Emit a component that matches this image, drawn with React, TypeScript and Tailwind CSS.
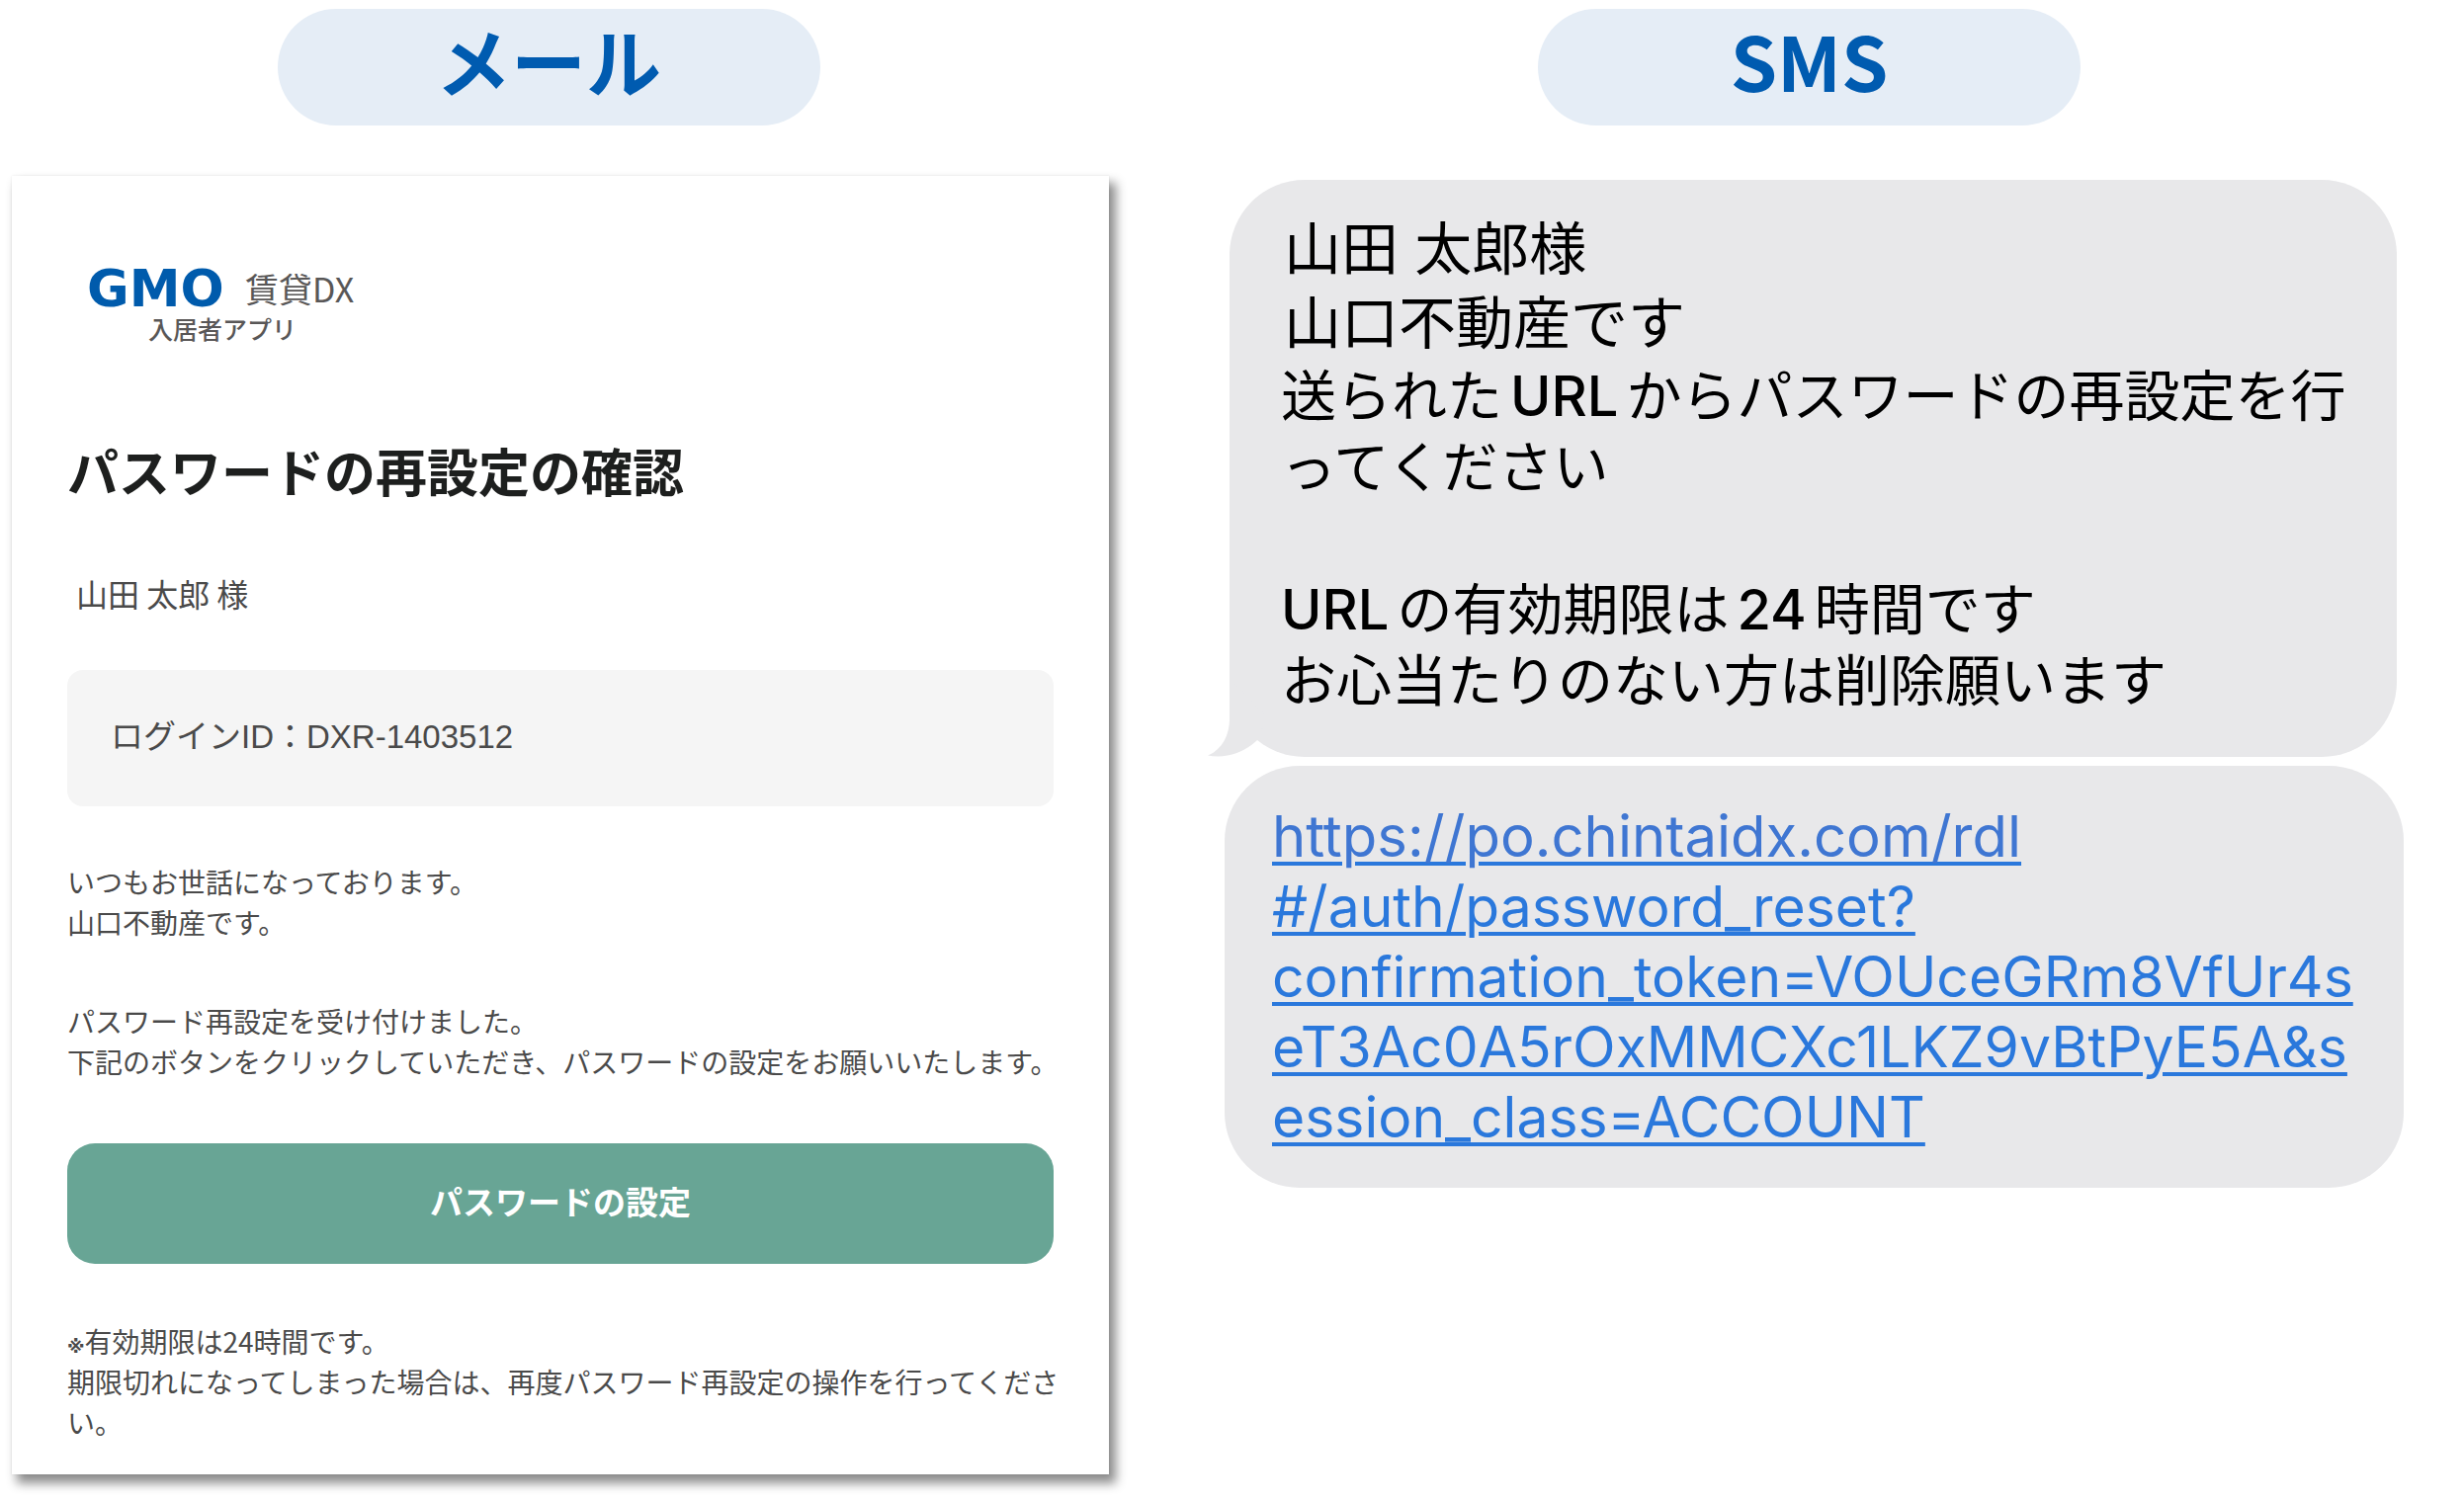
import type { ReactNode } from 'react';

const RESET_LINK_LINES = [
    '#/auth/password_reset?',
    'confirmation_token=VOUceGRm8VfUr4s',
    'eT3Ac0A5rOxMMCXc1LKZ9vBtPyE5A&s',
    'ession_class=ACCOUNT',
];

const Pill = ({ children }: { children: ReactNode }) => (
    <h2 className="flex h-[118px] w-[549px] items-center justify-center rounded-full bg-[#e5edf6] pb-4 text-[76px] leading-none font-bold text-[#005bb0]">
        {children}
    </h2>
);

// Latin words inside a Japanese line get a little air on both sides
const Latin = ({ children }: { children: ReactNode }) => (
    <span className="mr-2 font-medium">{children}</span>
);

const Logo = () => (
    <div className="w-[304px]">
        <div className="flex h-10 items-center pl-5">
            <span className="w-[160px] font-['DejaVu_Sans',sans-serif] text-[52px] leading-10 font-bold text-[#005bac]">GMO</span>
            <span className="text-[34px] leading-10 text-[#595757]">賃貸DX</span>
        </div>
        <div className="mt-1 pl-[82px] text-[25px] leading-8 font-medium text-[#595757]">入居者アプリ</div>
    </div>
);

const MailCard = () => (
    <article className="bg-white px-14 pt-[94px] pb-8 text-[28px] leading-[41px] whitespace-nowrap text-[#4a4a4a] shadow-[6px_8px_10px_1px_rgba(0,0,0,0.45),0_0_2px_rgba(0,0,0,0.08)]">
        <Logo />
        <h1 className="mt-24 text-[52px] leading-[64px] font-bold text-[#1d1f1e]">パスワードの再設定の確認</h1>
        <p className="mt-[72px] pl-[9px] text-[32px] leading-10">山田 太郎 様</p>
        <div className="mt-[58px] flex h-[138px] items-center rounded-2xl bg-[#f5f5f5] pb-1 pl-11 font-['Liberation_Sans','Noto_Sans_CJK_JP',sans-serif] text-[33px]">
            ログインID：DXR-1403512
        </div>
        <p className="mt-14">
            いつもお世話になっております。<br />
            山口不動産です。
        </p>
        <p className="mt-[59px]">
            パスワード再設定を受け付けました。<br />
            下記のボタンをクリックしていただき、パスワードの設定をお願いいたします。
        </p>
        <button type="button" className="mt-[62px] h-[122px] w-full rounded-[28px] bg-[#68a595] pb-1.5 text-[33px] font-bold text-white">
            パスワードの設定
        </button>
        <p className="mt-[58px]">
            <span className="font-['DejaVu_Sans',sans-serif] text-lg font-bold">※</span>有効期限は24時間です。<br />
            期限切れになってしまった場合は、再度パスワード再設定の操作を行ってくださ<br />
            い。
        </p>
    </article>
);

const SmsThread = () => (
    <div className="font-['Inter','Noto_Sans_CJK_JP',sans-serif] whitespace-nowrap">
        <div className="relative mr-[7px] ml-[5px] rounded-[76px] bg-[#e8e8ea] pt-[33px] pb-[41px] pl-[52px] text-[56px] leading-[72px] text-black">
            <p className="pl-[3px] text-[58px] leading-[75px]">
                山田 太郎様<br />
                山口不動産です
            </p>
            <p>
                送られた<span className="ml-2"><Latin>URL</Latin></span>からパスワードの再設定を行<br />
                ってください
            </p>
            <p className="mt-[72px]">
                <Latin>URL</Latin>の有効期限は<span className="ml-2"><Latin>24</Latin></span>時間です<br />
                お心当たりのない方は削除願います
            </p>
            <svg className="absolute bottom-0 -left-[22px] h-20 w-[60px]" viewBox="0 0 60 80" aria-hidden="true">
                <path d="M22 0V42C22 58 14 73 0 78.500C18 82 36 76 50 63L60 40Z" fill="#e8e8ea" />
            </svg>
        </div>
        <div className="mt-[9px] rounded-[76px] bg-[#e8e8ea] pt-9 pb-9 pl-12 text-[57px] leading-[71px]">
            <a href="#reset" className="text-[#2a78dc] underline decoration-4 underline-offset-[5px]">
                <span className="text-[58px] text-[#3f76d2]">https://po.chintaidx.com/rdl</span>
                {RESET_LINK_LINES.map((line) => (
                    <span key={line}>
                        <br />
                        {line}
                    </span>
                ))}
            </a>
        </div>
    </div>
);

const App = () => (
    <main
        lang="ja"
        className="grid grid-cols-[minmax(0,1110fr)_minmax(0,1193fr)] items-start gap-x-[117px] overflow-hidden bg-white pt-[9px] pr-[61px] pb-7 pl-3 font-['Noto_Sans_CJK_JP',sans-serif]"
    >
        <section>
            <div className="mb-[51px] flex justify-center pr-6">
                <Pill>メール</Pill>
            </div>
            <MailCard />
        </section>
        <section>
            <div className="mb-[55px] flex justify-center pr-[10px]">
                <Pill>SMS</Pill>
            </div>
            <SmsThread />
        </section>
    </main>
);

export default App;
